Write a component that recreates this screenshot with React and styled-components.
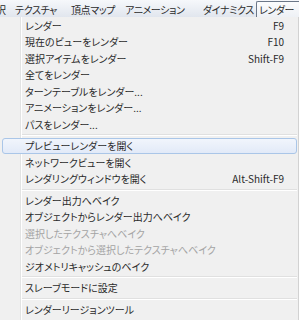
import React from "react";
import styled, { createGlobalStyle } from "styled-components";

const Global = createGlobalStyle`
  html, body {
    margin: 0;
    padding: 0;
    background: #f0f0f0;
    overflow: hidden;
  }
  body {
    font-family: "Noto Sans CJK JP", "Noto Sans", sans-serif;
    font-feature-settings: "palt";
    font-size: 10px;
    color: #2a2a2a;
  }
`;

const Window = styled.div`
  width: 299px;
  height: 320px;
  display: flex;
  flex-direction: column;
`;

const MenuBar = styled.div`
  height: 17px;
  flex: none;
  display: flex;
  align-items: stretch;
  overflow: hidden;
  white-space: nowrap;
  font-size: 10px;
  letter-spacing: -0.4px;
  background: linear-gradient(#f6f8fb, #e1e6ee);
`;

// menu titles keep the spacing of the original menu strip
const BarItem = styled.div`
  flex: ${(p) => (p.$w ? "none" : "1")};
  width: ${(p) => (p.$w ? `${p.$w}px` : "auto")};
  box-sizing: border-box;
  display: flex;
  align-items: center;
  padding: 0 0 0 ${(p) => (p.$active ? "2px" : "3px")};
  margin-left: ${(p) => (p.$cut ? "-8px" : "0")};
  margin-top: 1px;
  border: 1px solid ${(p) => (p.$active ? "#6b7788" : "transparent")};
  border-right: none;
  border-bottom: none;
  border-radius: 2px 0 0 0;
  background: ${(p) =>
    p.$active ? "linear-gradient(#fbfcfd, #eef1f5)" : "transparent"};
`;

const Dropdown = styled.div`
  flex: 1;
  display: flex;
  flex-direction: column;
  border-right: 1px solid #d2d2d2;
  background: linear-gradient(
      to right,
      transparent 20px,
      #e2e3e3 20px,
      #e2e3e3 21px,
      #ffffff 21px,
      #ffffff 22px,
      transparent 22px
    ),
    #f0f0f0;
`;

const Item = styled.div`
  height: 16.5px;
  flex: none;
  box-sizing: border-box;
  margin: 0 1px 0 2px;
  padding: 0 12px 0 22px;
  display: flex;
  align-items: center;
  justify-content: space-between;
  white-space: nowrap;
  border: 1px solid ${(p) => (p.$hot ? "#aac6e8" : "transparent")};
  border-radius: 3px;
  color: ${(p) => (p.$disabled ? "#a4a4a4" : "#2a2a2a")};
  background: ${(p) =>
    p.$hot ? "linear-gradient(#f1f5fc, #e2eaf8)" : "transparent"};
`;

const Shortcut = styled.span`
  font-size: 10px;
`;

const Separator = styled.div`
  height: 5px;
  flex: none;
  margin: 0 1px 0 22px;
  display: flex;
  flex-direction: column;
  justify-content: center;

  &::before {
    content: "";
    height: 1px;
    background: #e0e0e0;
  }
  &::after {
    content: "";
    height: 1px;
    background: #ffffff;
  }
`;

const bar = [
  { label: "択", cut: true, w: 19 },
  { label: "テクスチャ", w: 56 },
  { label: "頂点マップ", w: 54 },
  { label: "アニメーション", w: 78 },
  { label: "ダイナミクス", w: 57 },
  { label: "レンダー", active: true },
];

const items = [
  { label: "レンダー", key: "F9" },
  { label: "現在のビューをレンダー", key: "F10" },
  { label: "選択アイテムをレンダー", key: "Shift-F9" },
  { label: "全てをレンダー" },
  { label: "ターンテーブルをレンダー..." },
  { label: "アニメーションをレンダー..." },
  { label: "パスをレンダー..." },
  "sep",
  { label: "プレビューレンダーを開く", hot: true },
  { label: "ネットワークビューを開く" },
  { label: "レンダリングウィンドウを開く", key: "Alt-Shift-F9" },
  "sep",
  { label: "レンダー出力へベイク" },
  { label: "オブジェクトからレンダー出力へベイク" },
  { label: "選択したテクスチャへベイク", disabled: true },
  { label: "オブジェクトから選択したテクスチャへベイク", disabled: true },
  { label: "ジオメトリキャッシュのベイク" },
  "sep",
  { label: "スレーブモードに設定" },
  "sep",
  { label: "レンダーリージョンツール" },
];

export default function App() {
  return (
    <Window>
      <Global />
      <MenuBar>
        {bar.map((b) => (
          <BarItem key={b.label} $cut={b.cut} $w={b.w} $active={b.active}>
            {b.label}
          </BarItem>
        ))}
      </MenuBar>
      <Dropdown>
        {items.map((it, i) =>
          it === "sep" ? (
            <Separator key={i} />
          ) : (
            <Item key={i} $hot={it.hot} $disabled={it.disabled}>
              <span>{it.label}</span>
              {it.key && <Shortcut>{it.key}</Shortcut>}
            </Item>
          )
        )}
      </Dropdown>
    </Window>
  );
}
